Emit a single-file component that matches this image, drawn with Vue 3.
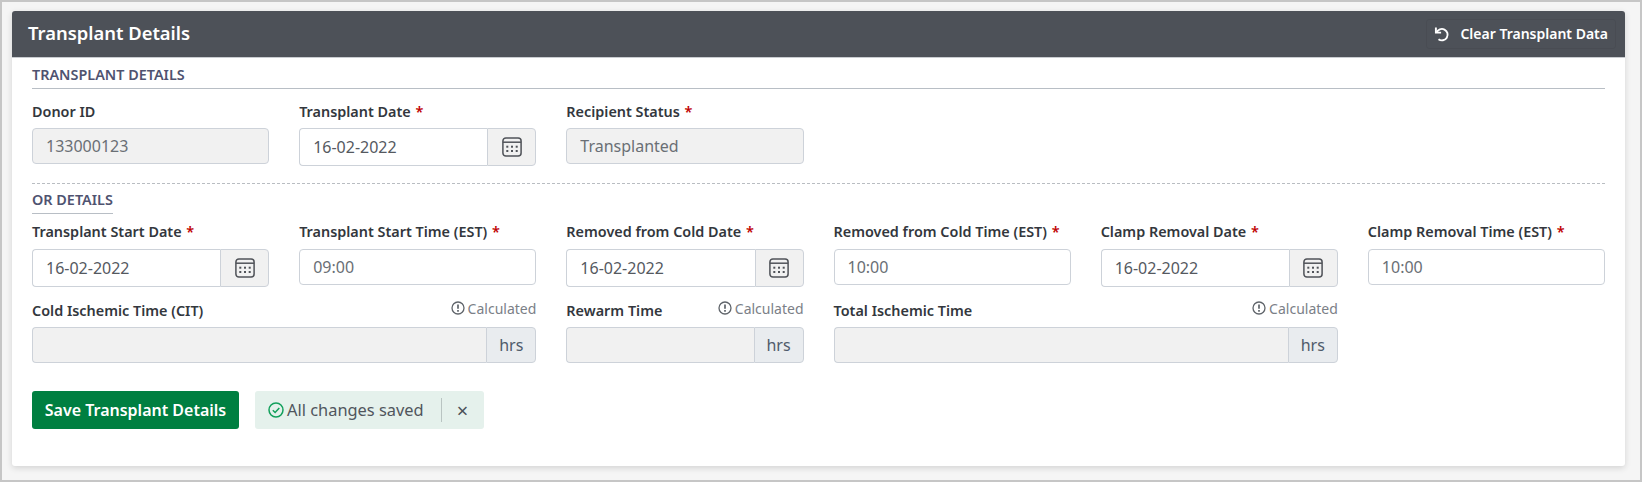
<template>
  <div class="page">
    <section class="card">
      <header class="card-head">
        <h1>Transplant Details</h1>
        <button class="clear-btn" type="button">
          <svg class="undo" viewBox="0 0 16 16" width="16" height="16" fill="none" stroke="currentColor" stroke-width="1.9">
            <path d="M2.6 6.6a5.7 5.7 0 1 1 1.9 6.6" />
            <path d="M1.9 1.4v5.2h5.2" />
          </svg>
          <span>Clear Transplant Data</span>
        </button>
      </header>

      <div class="card-body">
        <h2 class="section-title full">TRANSPLANT DETAILS</h2>
        <div class="grid first-row">
          <div v-for="f in topFields" :key="f.label" class="field">
            <div class="label-row">
              <label>{{ f.label }} <span v-if="f.required" class="req">*</span></label>
            </div>
            <div v-if="f.type === 'date'" class="date-group">
              <input class="control" :value="f.value" readonly />
              <span class="cal-addon">
                <svg viewBox="0 0 20 20" width="20" height="20" fill="none" stroke="#505359" stroke-width="1.5">
                  <rect x="0.9" y="0.9" width="18.2" height="18.2" rx="3" />
                  <path d="M0.9 5.2h18.2" />
                  <g fill="#505359" stroke="none">
                    <rect x="4.3" y="8.7" width="2" height="2" />
                    <rect x="9" y="8.7" width="2" height="2" />
                    <rect x="13.7" y="8.7" width="2" height="2" />
                    <rect x="4.3" y="13" width="2" height="2" />
                    <rect x="9" y="13" width="2" height="2" />
                    <rect x="13.7" y="13" width="2" height="2" />
                  </g>
                </svg>
              </span>
            </div>
            <input v-else class="control plain" :class="{ off: f.type === 'off' }" :value="f.value" readonly />
          </div>
        </div>

        <div class="dashed"></div>

        <h2 class="section-title short">OR DETAILS</h2>
        <div class="grid or-row">
          <div v-for="f in orFields" :key="f.label" class="field">
            <div class="label-row">
              <label>{{ f.label }} <span class="req">*</span></label>
            </div>
            <div v-if="f.type === 'date'" class="date-group">
              <input class="control" :value="f.value" readonly />
              <span class="cal-addon">
                <svg viewBox="0 0 20 20" width="20" height="20" fill="none" stroke="#505359" stroke-width="1.5">
                  <rect x="0.9" y="0.9" width="18.2" height="18.2" rx="3" />
                  <path d="M0.9 5.2h18.2" />
                  <g fill="#505359" stroke="none">
                    <rect x="4.3" y="8.7" width="2" height="2" />
                    <rect x="9" y="8.7" width="2" height="2" />
                    <rect x="13.7" y="8.7" width="2" height="2" />
                    <rect x="4.3" y="13" width="2" height="2" />
                    <rect x="9" y="13" width="2" height="2" />
                    <rect x="13.7" y="13" width="2" height="2" />
                  </g>
                </svg>
              </span>
            </div>
            <input v-else class="control plain" :value="f.value" readonly />
          </div>
        </div>

        <div class="grid calc-row">
          <div v-for="f in calcFields" :key="f.label" class="field" :class="f.span">
            <div class="label-row calc">
              <label>{{ f.label }}</label>
              <span class="calc-note">
                <svg viewBox="0 0 14 14" width="14" height="14" fill="none" stroke="#5f646a" stroke-width="1.3">
                  <circle cx="7" cy="7" r="6" />
                  <path d="M7 3.4v4.4" stroke-width="1.7" />
                  <path d="M7 9v1.7" stroke-width="1.7" />
                </svg>
                Calculated
              </span>
            </div>
            <div class="hrs-group">
              <input class="control off" readonly />
              <span class="hrs">hrs</span>
            </div>
          </div>
        </div>

        <div class="actions">
          <button class="save-btn" type="button">Save Transplant Details</button>
          <div class="saved">
            <svg viewBox="0 0 16 16" width="16" height="16" fill="none" stroke="#12a05c" stroke-width="1.5">
              <circle cx="8" cy="8" r="7" />
              <path d="M4.8 8.2l2.3 2.3 4.2-4.6" />
            </svg>
            <span class="saved-text">All changes saved</span>
            <span class="saved-sep"></span>
            <span class="saved-x">×</span>
          </div>
        </div>
      </div>
    </section>
  </div>
</template>

<script setup>
const topFields = [
  { label: "Donor ID", value: "133000123", type: "off" },
  { label: "Transplant Date", value: "16-02-2022", type: "date", required: true },
  { label: "Recipient Status", value: "Transplanted", type: "off", required: true },
];

const orFields = [
  { label: "Transplant Start Date", value: "16-02-2022", type: "date" },
  { label: "Transplant Start Time (EST)", value: "09:00", type: "time" },
  { label: "Removed from Cold Date", value: "16-02-2022", type: "date" },
  { label: "Removed from Cold Time (EST)", value: "10:00", type: "time" },
  { label: "Clamp Removal Date", value: "16-02-2022", type: "date" },
  { label: "Clamp Removal Time (EST)", value: "10:00", type: "time" },
];

const calcFields = [
  { label: "Cold Ischemic Time (CIT)", span: "span-2" },
  { label: "Rewarm Time", span: "" },
  { label: "Total Ischemic Time", span: "span-2" },
];
</script>

<style>
html,
body {
  margin: 0;
  background: #f5f5f5;
}
</style>

<style scoped>
.page {
  box-sizing: border-box;
  width: 1642px;
  height: 482px;
  padding: 9px 15px 14px 10px;
  border: 2px solid #c6c6c6;
  background: #f5f5f5;
  font-family: "Noto Sans", sans-serif;
  color: #343a40;
}

.card {
  background: #fff;
  height: 455px;
  border-radius: 3px;
  box-shadow: 0 2px 6px rgba(0, 0, 0, 0.14);
}

.card-head {
  height: 47px;
  display: flex;
  align-items: center;
  justify-content: space-between;
  padding: 0 9px 1px 16px;
  background: #4d5158;
  border-bottom: 1px solid #c9ccd0;
  border-radius: 3px 3px 0 0;
  box-sizing: border-box;
}

.card-head h1 {
  margin: 0 0 2px;
  font-size: 18.4px;
  font-weight: 600;
  color: #fff;
}

.clear-btn {
  box-sizing: border-box;
  display: flex;
  align-items: center;
  gap: 10px;
  height: 30px;
  padding: 0 7px 0 7px;
  border: 1px solid rgba(0, 0, 0, 0.05);
  border-radius: 3px;
  background: none;
  color: #fff;
  font: 600 14px "Noto Sans", sans-serif;
}

.card-body {
  padding: 8px 20px 0;
}

.section-title {
  margin: 0;
  font-size: 14.4px;
  line-height: 18px;
  font-weight: 600;
  color: #4f5370;
  padding-bottom: 4px;
  border-bottom: 1px solid #b8bec5;
}

.section-title.short {
  display: inline-block;
  vertical-align: top;
}

.grid {
  display: grid;
  grid-template-columns: repeat(6, 1fr);
  column-gap: 30px;
}

.first-row {
  margin-top: 13px;
  height: 81px;
}

.or-row {
  margin-top: 9px;
  height: 70px;
}

.calc-row {
  margin-top: 8px;
}

.span-2 {
  grid-column: span 2;
}

.label-row {
  height: 18px;
  margin-bottom: 8px;
  display: flex;
  justify-content: space-between;
  align-items: center;
}

.or-row .label-row {
  height: 16px;
  margin-bottom: 10px;
}

.label-row label {
  font-size: 14.4px;
  font-weight: 600;
  color: #33373d;
  white-space: nowrap;
}

.req {
  margin-left: 1px;
  color: #c00000;
}

.control {
  box-sizing: border-box;
  display: block;
  width: 100%;
  min-width: 0;
  height: 36px;
  padding: 0 13px;
  border: 1px solid #cdd2d9;
  border-radius: 4px;
  background: #fff;
  font: 16px "Noto Sans", sans-serif;
  color: #6a6f75;
  outline: none;
}

.control.off {
  background: #f1f1f1;
}

.date-group,
.hrs-group {
  display: flex;
}

.date-group .control {
  height: 38px;
  flex: 1;
  border-right: none;
  border-radius: 4px 0 0 4px;
  color: #55595f;
}

.cal-addon {
  width: 49px;
  flex: none;
  height: 38px;
  box-sizing: border-box;
  display: flex;
  align-items: center;
  justify-content: center;
  background: #f1f1f1;
  border: 1px solid #cdd2d9;
  border-radius: 0 4px 4px 0;
}

.hrs-group .control {
  flex: 1;
  border-right: none;
  border-radius: 4px 0 0 4px;
}

.hrs {
  width: 50px;
  flex: none;
  height: 36px;
  box-sizing: border-box;
  display: flex;
  align-items: center;
  justify-content: center;
  background: #e9ecef;
  border: 1px solid #cdd2d9;
  border-radius: 0 4px 4px 0;
  font-size: 16px;
  color: #4f5b6b;
}

.calc-note {
  display: inline-flex;
  align-items: center;
  gap: 3px;
  font-size: 14px;
  color: #7b8087;
  margin-top: -4px;
}

.dashed {
  height: 1px;
  background: repeating-linear-gradient(90deg, #b9bdc2 0 3px, transparent 3px 5px);
  margin-bottom: 7px;
}

.actions {
  display: flex;
  gap: 16px;
  margin-top: 28px;
}

.save-btn {
  height: 38px;
  width: 207px;
  border: none;
  border-radius: 3px;
  background: #007f41;
  color: #fff;
  font: 600 16px "Noto Sans", sans-serif;
  padding: 0;
}

.saved {
  height: 38px;
  width: 229px;
  box-sizing: border-box;
  padding: 0 0 0 13px;
  display: flex;
  align-items: center;
  background: #e5f1ec;
  border-radius: 3px;
}

.saved-text {
  margin: 0 0 1px 3px;
  font-size: 16.4px;
  color: #50565d;
}

.saved-sep {
  width: 1px;
  height: 24px;
  margin-left: 17px;
  background: #b9c4c2;
}

.saved-x {
  margin-left: 15px;
  font-size: 20px;
  line-height: 21px;
  color: #4b5158;
}
</style>
